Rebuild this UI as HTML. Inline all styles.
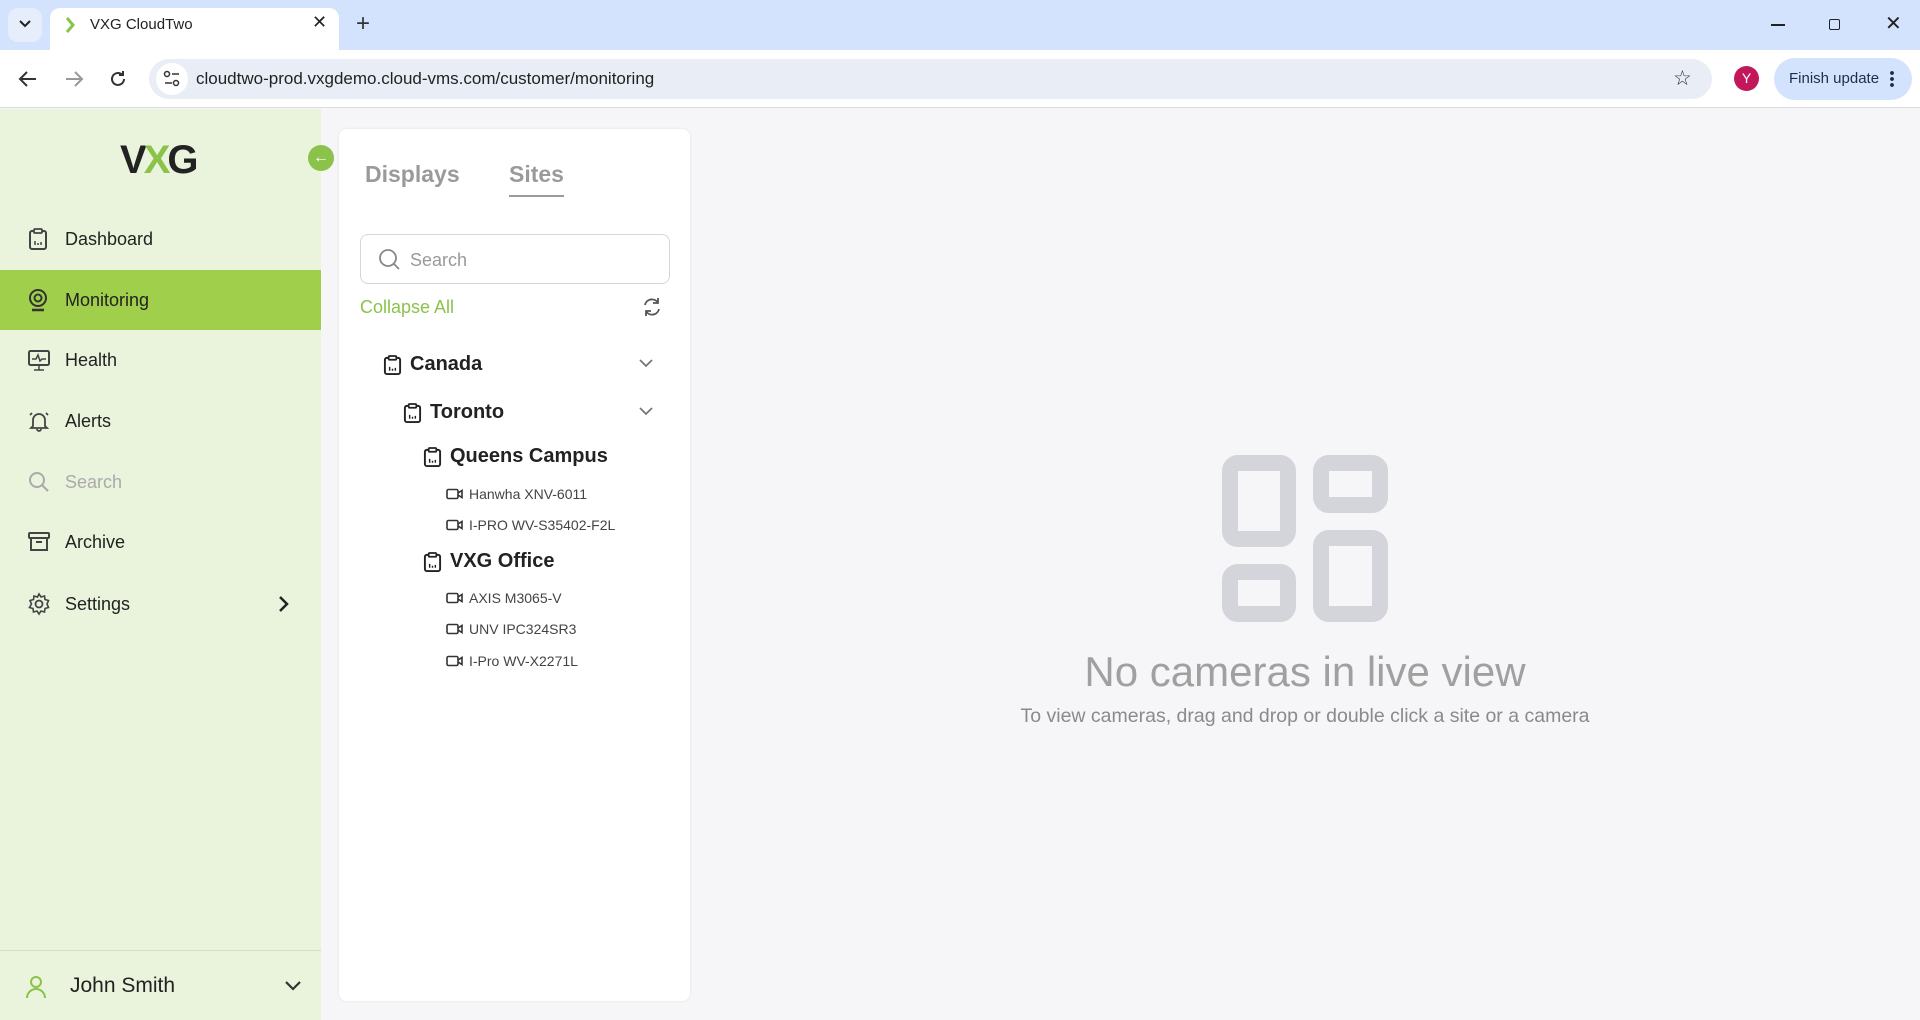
<!DOCTYPE html>
<html><head><meta charset="utf-8"><style>
*{box-sizing:border-box;margin:0;padding:0}
body{width:1920px;height:1020px;overflow:hidden;font-family:"Liberation Sans",sans-serif;background:#f6f6f8;position:relative}
.abs{position:absolute}
.nav{position:absolute;left:0;width:321px;height:60px;display:flex;align-items:center;font-size:18px;color:#222}
.nav svg{position:absolute;left:27px}
.nav span{position:absolute;left:65px}
.tree{position:absolute;font-weight:bold;font-size:20px;color:#222;display:flex;align-items:center}
.cam{position:absolute;font-size:14px;color:#444;display:flex;align-items:center}
</style></head><body>
<div class="abs" style="left:0;top:0;width:1920px;height:50px;background:#d3e3fd"></div>
<div class="abs" style="left:8px;top:8px;width:34px;height:34px;border-radius:10px;background:#e6eefb"></div>
<svg class="abs" style="left:18px;top:19px" width="14" height="10"><path d="M2 2l5 5 5-5" stroke="#222" stroke-width="2" fill="none"/></svg>
<div class="abs" style="left:50px;top:8px;width:289px;height:44px;background:#fff;border-radius:10px 10px 0 0"></div>
<svg class="abs" style="left:64px;top:16px" width="12" height="18"><path d="M3 2l6 7-6 7" stroke="#8bc34a" stroke-width="3" fill="none"/></svg>
<div class="abs" style="left:90px;top:16px;font-size:15px;color:#222">VXG CloudTwo</div>
<div class="abs" style="left:312px;top:12px;font-size:18px;color:#222">✕</div>
<div class="abs" style="left:356px;top:10px;font-size:24px;color:#333">+</div>
<div class="abs" style="left:1771px;top:24px;width:14px;height:1.5px;background:#222"></div>
<div class="abs" style="left:1829px;top:19px;width:11px;height:11px;border:1.5px solid #222;border-radius:2px"></div>
<div class="abs" style="left:1885px;top:11px;font-size:20px;color:#222">✕</div>
<div class="abs" style="left:0;top:50px;width:1920px;height:58px;background:#fff;border-bottom:1px solid #dcdcdc"></div>
<svg class="abs" style="left:16px;top:68px" width="24" height="22"><path d="M20 11H4M11 4l-7 7 7 7" stroke="#333" stroke-width="2" fill="none"/></svg>
<svg class="abs" style="left:62px;top:68px" width="24" height="22"><path d="M4 11h16M13 4l7 7-7 7" stroke="#999" stroke-width="2" fill="none"/></svg>
<svg class="abs" style="left:106px;top:67px" width="24" height="24"><path d="M18 12a6 6 0 1 1-2-4.5M17 4v4h-4" stroke="#333" stroke-width="2" fill="none"/></svg>
<div class="abs" style="left:149px;top:59px;width:1563px;height:40px;border-radius:20px;background:#e9eef6"></div>
<div class="abs" style="left:156px;top:63px;width:32px;height:32px;border-radius:16px;background:#fff"></div>
<svg class="abs" style="left:163px;top:70px" width="18" height="18"><circle cx="4" cy="4" r="2.5" stroke="#333" stroke-width="1.5" fill="none"/><path d="M9 4h7M2 13h7" stroke="#333" stroke-width="1.5"/><circle cx="13" cy="13" r="2.5" stroke="#333" stroke-width="1.5" fill="none"/></svg>
<div class="abs" style="left:196px;top:69px;font-size:17px;color:#222">cloudtwo-prod.vxgdemo.cloud-vms.com/customer/monitoring</div>
<div class="abs" style="left:1673px;top:66px;font-size:21px;color:#333">☆</div>
<div class="abs" style="left:1734px;top:66px;width:25px;height:25px;border-radius:50%;background:#c2185b;color:#fff;font-size:14px;text-align:center;line-height:25px">Y</div>
<div class="abs" style="left:1774px;top:58px;width:138px;height:42px;border-radius:21px;background:#d3e3fd"></div>
<div class="abs" style="left:1789px;top:70px;font-size:15px;color:#1f2d4d">Finish update</div>
<div class="abs" style="left:1890px;top:70px;width:4px;height:18px;background:radial-gradient(circle,#1f2d4d 1.8px,transparent 2px) 0 0/4px 6px"></div>

<div class="abs" style="left:0;top:109px;width:321px;height:911px;background:#eaf3dc"></div>
<div class="abs" style="left:120px;top:138px;font-size:40px;font-weight:bold;letter-spacing:-3px;color:#222">V<span style="color:#8bc34a">X</span>G</div>
<div class="abs" style="left:308px;top:145px;width:26px;height:26px;border-radius:50%;background:#8bc34a;color:#fff;font-size:16px;text-align:center;line-height:25px;font-weight:bold">←</div>

<div class="nav" style="top:209px"><svg width="22" height="24" viewBox="0 0 22 24"><rect x="3" y="4" width="16" height="18" rx="2" stroke="#444" stroke-width="2" fill="none"/><rect x="7" y="2" width="8" height="4" rx="1" stroke="#444" stroke-width="1.8" fill="#eaf3dc"/><path d="M8 18v-4M11 18v-2M14 18v-3" stroke="#444" stroke-width="1.5"/></svg><span>Dashboard</span></div>
<div class="nav" style="top:270px;background:#a0cf4c"><svg width="22" height="24" viewBox="0 0 22 24"><circle cx="11" cy="10" r="8" stroke="#333" stroke-width="2" fill="none"/><circle cx="11" cy="10" r="3.5" stroke="#333" stroke-width="2" fill="none"/><path d="M5 22h12" stroke="#333" stroke-width="2.5"/></svg><span>Monitoring</span></div>
<div class="nav" style="top:330px"><svg width="24" height="24" viewBox="0 0 24 24"><rect x="2" y="3" width="20" height="14" rx="1.5" stroke="#444" stroke-width="2" fill="none"/><path d="M5 11h4l2-4 2 6 2-2h4M12 17v5M7 22h10" stroke="#444" stroke-width="1.5" fill="none"/></svg><span>Health</span></div>
<div class="nav" style="top:391px"><svg width="24" height="24" viewBox="0 0 24 24"><path d="M6 17V11a6 6 0 0 1 12 0v6l2 2H4zM10 20a2 2 0 0 0 4 0M3 6l2-2M21 6l-2-2" stroke="#444" stroke-width="1.8" fill="none"/></svg><span>Alerts</span></div>
<div class="nav" style="top:452px;color:#aaa"><svg width="24" height="24" viewBox="0 0 24 24"><circle cx="10" cy="10" r="7" stroke="#aaa" stroke-width="2" fill="none"/><path d="M15 15l6 6" stroke="#aaa" stroke-width="2"/></svg><span>Search</span></div>
<div class="nav" style="top:512px"><svg width="24" height="24" viewBox="0 0 24 24"><rect x="2" y="3" width="20" height="5" rx="1" stroke="#444" stroke-width="2" fill="none"/><path d="M4 8v12h16V8M9 12h6" stroke="#444" stroke-width="2" fill="none"/></svg><span>Archive</span></div>
<div class="nav" style="top:574px"><svg width="24" height="24" viewBox="0 0 24 24"><circle cx="12" cy="12" r="3.5" stroke="#444" stroke-width="1.8" fill="none"/><path d="M12 2l2 3 3.5-1 .5 3.5 3.5 1-1.5 3.5 1.5 3.5-3.5 1-.5 3.5-3.5-1-2 3-2-3-3.5 1-.5-3.5-3.5-1L4.5 12 3 8.5l3.5-1L7 4l3.5 1z" stroke="#444" stroke-width="1.6" fill="none"/></svg><span>Settings</span><svg style="left:278px" width="12" height="18"><path d="M2 2l7 7-7 7" stroke="#222" stroke-width="2.5" fill="none"/></svg></div>

<div class="abs" style="left:0;top:950px;width:321px;height:1px;background:#d6dccb"></div>
<svg class="abs" style="left:25px;top:975px" width="22" height="24"><circle cx="11" cy="7" r="5" stroke="#8bc34a" stroke-width="2" fill="none"/><path d="M2 23a9 9 0 0 1 18 0" stroke="#8bc34a" stroke-width="2" fill="none"/></svg>
<div class="abs" style="left:70px;top:974px;font-size:21px;color:#222">John Smith</div>
<svg class="abs" style="left:284px;top:980px" width="18" height="12"><path d="M2 2l7 7 7-7" stroke="#333" stroke-width="2.2" fill="none"/></svg>

<div class="abs" style="left:339px;top:129px;width:351px;height:872px;background:#fff;border-radius:8px;box-shadow:0 0 3px rgba(0,0,0,.08)"></div>
<div class="abs" style="left:365px;top:161px;font-size:23px;font-weight:bold;color:#9a9a9a">Displays</div>
<div class="abs" style="left:509px;top:161px;font-size:23px;font-weight:bold;color:#9a9a9a">Sites</div>
<div class="abs" style="left:509px;top:195px;width:55px;height:2px;background:#9a9a9a"></div>
<div class="abs" style="left:360px;top:234px;width:310px;height:50px;border:1px solid #d6d6d6;border-radius:8px"></div>
<svg class="abs" style="left:378px;top:248px" width="24" height="24"><circle cx="10" cy="10" r="8" stroke="#888" stroke-width="1.8" fill="none"/><path d="M16 16l5 5" stroke="#888" stroke-width="1.8"/></svg>
<div class="abs" style="left:410px;top:250px;font-size:18px;color:#999">Search</div>
<div class="abs" style="left:360px;top:297px;font-size:18px;color:#8bc34a">Collapse All</div>
<svg class="abs" style="left:641px;top:296px" width="22" height="22" viewBox="0 0 22 22"><path d="M4 9a7 7 0 0 1 13-2M18 13a7 7 0 0 1-13 2M17 2v5h-5M5 20v-5h5" stroke="#555" stroke-width="1.8" fill="none"/></svg>

<svg width="0" height="0" style="position:absolute"><defs><symbol id="clip" viewBox="0 0 20 22"><rect x="2" y="3.5" width="16" height="17" rx="2" stroke="#222" stroke-width="2" fill="none"/><rect x="6" y="1.5" width="8" height="4" rx="1" stroke="#222" stroke-width="1.8" fill="#fff"/><path d="M7 17v-4M10 17v-2M13 17v-3" stroke="#222" stroke-width="1.5"/></symbol><symbol id="cam" viewBox="0 0 18 12"><rect x="1" y="1.5" width="11" height="9" rx="1.5" stroke="#333" stroke-width="1.6" fill="none"/><path d="M12 5l4-2.5v7L12 7" stroke="#333" stroke-width="1.6" fill="none"/></symbol></defs></svg>

<div class="tree" style="left:383px;top:353px"><svg width="19" height="22"><use href="#clip"/></svg><span style="margin-left:8px">Canada</span></div>
<svg class="abs" style="left:639px;top:358px" width="14" height="10"><path d="M1 2l6 6 6-6" stroke="#777" stroke-width="1.8" fill="none"/></svg>
<div class="tree" style="left:403px;top:401px"><svg width="19" height="22"><use href="#clip"/></svg><span style="margin-left:8px">Toronto</span></div>
<svg class="abs" style="left:639px;top:406px" width="14" height="10"><path d="M1 2l6 6 6-6" stroke="#777" stroke-width="1.8" fill="none"/></svg>
<div class="tree" style="left:423px;top:445px"><svg width="19" height="22"><use href="#clip"/></svg><span style="margin-left:8px">Queens Campus</span></div>
<div class="cam" style="left:446px;top:486px"><svg width="18" height="12"><use href="#cam"/></svg><span style="margin-left:5px">Hanwha XNV-6011</span></div>
<div class="cam" style="left:446px;top:517px"><svg width="18" height="12"><use href="#cam"/></svg><span style="margin-left:5px">I-PRO WV-S35402-F2L</span></div>
<div class="tree" style="left:423px;top:550px"><svg width="19" height="22"><use href="#clip"/></svg><span style="margin-left:8px">VXG Office</span></div>
<div class="cam" style="left:446px;top:590px"><svg width="18" height="12"><use href="#cam"/></svg><span style="margin-left:5px">AXIS M3065-V</span></div>
<div class="cam" style="left:446px;top:621px"><svg width="18" height="12"><use href="#cam"/></svg><span style="margin-left:5px">UNV IPC324SR3</span></div>
<div class="cam" style="left:446px;top:653px"><svg width="18" height="12"><use href="#cam"/></svg><span style="margin-left:5px">I-Pro WV-X2271L</span></div>

<svg class="abs" style="left:1220px;top:453px" width="172" height="172"><g stroke="#d3d5db" stroke-width="16" fill="none"><rect x="10" y="10" width="58" height="76" rx="8"/><rect x="101" y="10" width="59" height="42" rx="8"/><rect x="10" y="119" width="58" height="42" rx="8"/><rect x="101" y="85" width="59" height="76" rx="8"/></g></svg>
<div class="abs" style="left:900px;top:648px;width:810px;text-align:center;font-size:42px;color:#a0a0a0;font-weight:300">No cameras in live view</div>
<div class="abs" style="left:900px;top:705px;width:810px;text-align:center;font-size:19.5px;color:#8a8a8a">To view cameras, drag and drop or double click a site or a camera</div>
</body></html>
